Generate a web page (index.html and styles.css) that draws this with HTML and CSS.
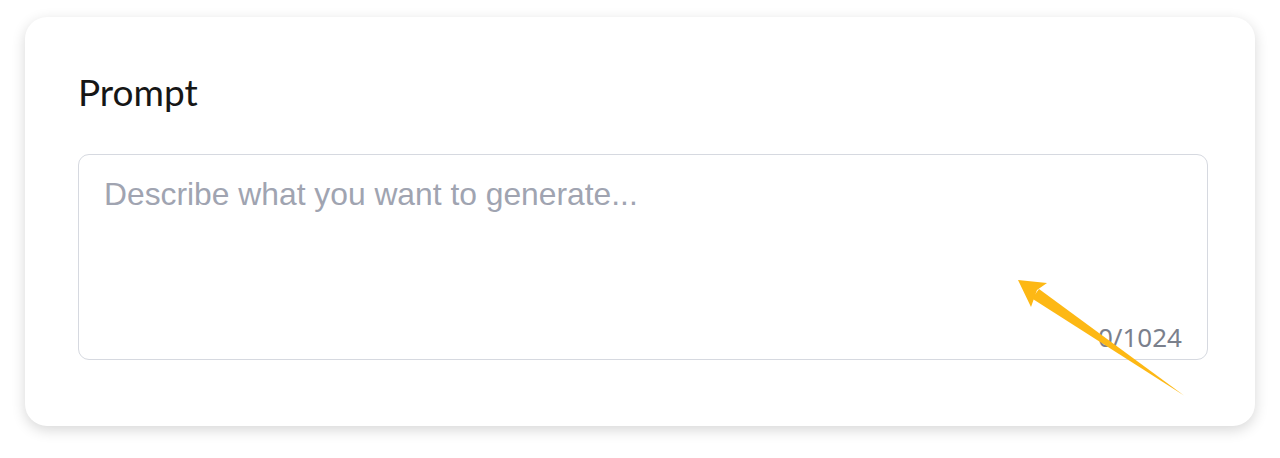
FILE: index.html
```html
<!DOCTYPE html>
<html lang="en">
<head>
<meta charset="UTF-8" />
<meta name="viewport" content="width=device-width, initial-scale=1.0"/>
<title>Prompt</title>
<link rel="stylesheet" href="styles.css">
</head>
<body>

<div class="card">
  <label class="label" for="prompt">Prompt</label>
  <div class="field">
    <textarea id="prompt" placeholder="Describe what you want to generate..."></textarea>
    <span class="count">0/1024</span>
  </div>
</div>

<!-- annotation arrow -->
<svg class="arrow" width="200" height="135" viewBox="0 0 200 135">
  <path d="M32 28.5 L39 19 L184 125.5 Z" fill="#fdb814"/>
  <path d="M18 10 L47 13 L37 20 L31 37 Z" fill="#fdb814"/>
</svg>

</body>
</html>
```

FILE: styles.css
```css
body {
  margin: 0;
  background-color: #fff;
  font-family: "Noto Sans", "Open Sans", sans-serif;
  height: 458px;
  overflow: hidden;
}
.card {
  margin: 17px 25px 0 25px;
  height: 409px;
  box-sizing: border-box;
  padding: 50px 47px 0 53px;
  background-color: #fff;
  border-radius: 22px;
  box-shadow: 0 4px 14px rgba(0,0,0,0.16);
}
.label {
  display: block;
  font-family: "Lato", sans-serif;
  font-size: 37px;
  line-height: 50px;
  color: #161616;
}
.field {
  position: relative;
  margin-top: 37px;
  height: 206px;
  border: 1px solid #d6d9e0;
  border-radius: 11px;
  box-sizing: border-box;
}
.field textarea {
  width: 100%;
  height: 100%;
  box-sizing: border-box;
  border: none;
  outline: none;
  resize: none;
  background: transparent;
  padding: 21px 25px;
  font-family: "Liberation Sans", Arial, sans-serif;
  font-size: 31.8px;
  line-height: 36px;
  color: #333;
}
.field textarea::placeholder {
  color: #a0a4b1;
}
.count {
  position: absolute;
  right: 25px;
  bottom: 9px;
  font-size: 26px;
  line-height: 26px;
  color: #7b808c;
}
.arrow {
  position: absolute;
  left: 1000px;
  top: 270px;
}
```
